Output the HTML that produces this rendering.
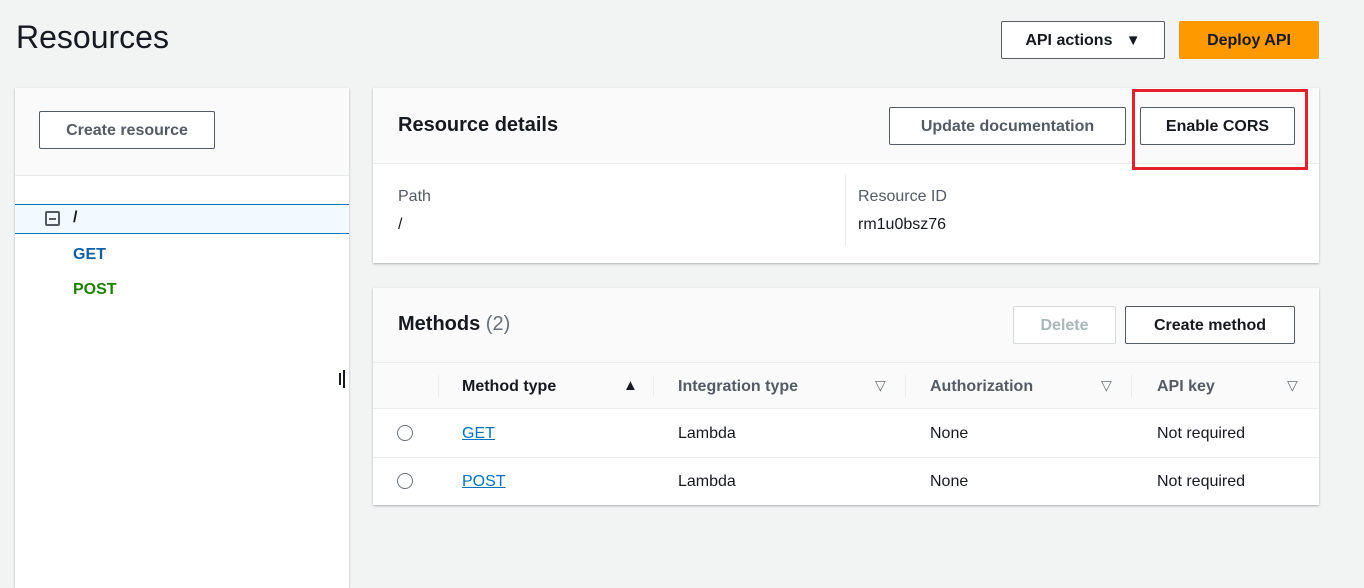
<!DOCTYPE html>
<html><head><style>
*{box-sizing:border-box;margin:0;padding:0}
body{width:1364px;height:586px;background:#f2f3f3;font-family:"Liberation Sans",sans-serif;position:relative;overflow:hidden;color:#16191f}
.a{position:absolute}
.btn{position:absolute;border:1px solid #545b64;border-radius:2px;background:#fff;font-weight:bold;font-size:16px;color:#545b64;display:flex;align-items:center;justify-content:center;padding-top:1px}
.card{position:absolute;background:#fff;box-shadow:0 1px 2px rgba(0,28,36,.3)}
.hdr{position:absolute;left:0;right:0;top:0;background:#fafafa;border-bottom:1px solid #eaeded}
.t{position:absolute;font-size:16px;white-space:nowrap}
.lnk{color:#0073bb;text-decoration:underline}
.radio{position:absolute;width:16px;height:16px;border:1.5px solid #687078;border-radius:50%}
.sep{position:absolute;width:1px;height:22px;background:#eaeded;top:12px}
.tri{position:absolute;font-size:14px;color:#687078}
</style></head><body>
<div class="t" style="left:16px;top:19px;font-size:32px;color:#16191f">Resources</div>
<div class="btn" style="left:1001px;top:21px;width:164px;height:38px;color:#16191f">API actions&nbsp;&nbsp;&nbsp;<span style="font-size:15px">▼</span></div>
<div class="btn" style="left:1179px;top:21px;width:140px;height:38px;background:#ff9900;border-color:#ff9900;color:#16191f">Deploy API</div>

<div class="card" style="left:15px;top:88px;width:334px;height:500px">
  <div class="hdr" style="height:88px"></div>
  <div class="btn" style="left:24px;top:23px;width:176px;height:38px">Create resource</div>
  <div class="a" style="left:0;top:116px;width:334px;height:30px;background:#f1faff;border-top:1px solid #0073bb;border-bottom:1px solid #0073bb"></div>
  <div class="a" style="left:30px;top:123px;width:15px;height:15px;border:2px solid #545b64;border-radius:2px"><div class="a" style="left:2px;top:4.5px;width:7px;height:2px;background:#545b64"></div></div>
  <div class="t" style="left:58px;top:121px;font-weight:bold">/</div>
  <div class="t" style="left:58px;top:158px;font-weight:bold;color:#0f5fa5">GET</div>
  <div class="t" style="left:58px;top:193px;font-weight:bold;color:#1d8102">POST</div>
</div>
<div class="a" style="left:339px;top:373px;width:2px;height:12px;background:#16191f"></div>
<div class="a" style="left:343px;top:370px;width:2px;height:18px;background:#16191f"></div>

<div class="card" style="left:373px;top:88px;width:946px;height:175px">
  <div class="hdr" style="height:76px"></div>
  <div class="t" style="left:25px;top:26px;font-size:20px;font-weight:bold">Resource details</div>
  <div class="btn" style="left:516px;top:19px;width:237px;height:38px">Update documentation</div>
  <div class="btn" style="left:767px;top:19px;width:155px;height:38px;color:#16191f">Enable CORS</div>
  <div class="a" style="left:472px;top:86px;width:1px;height:72px;background:#eaeded"></div>
  <div class="t" style="left:25px;top:100px;color:#545b64">Path</div>
  <div class="t" style="left:25px;top:128px">/</div>
  <div class="t" style="left:485px;top:100px;color:#545b64">Resource ID</div>
  <div class="t" style="left:485px;top:128px">rm1u0bsz76</div>
</div>
<div class="a" style="left:1132px;top:89px;width:176px;height:81px;border:3px solid #e3202c"></div>

<div class="card" style="left:373px;top:288px;width:946px;height:217px">
  <div class="hdr" style="height:75px"></div>
  <div class="t" style="left:25px;top:25px;font-size:20px;font-weight:bold">Methods <span style="font-weight:normal;color:#687078">(2)</span></div>
  <div class="btn" style="left:640px;top:18px;width:103px;height:38px;border-color:#d5dbdb;color:#aab7b8">Delete</div>
  <div class="btn" style="left:752px;top:18px;width:170px;height:38px;color:#16191f">Create method</div>
  <div class="a" style="left:0;top:75px;width:946px;height:46px;background:#fafafa;border-bottom:1px solid #eaeded"></div>
  <div class="a" style="left:0;top:75px;width:946px;height:46px">
    <div class="sep" style="left:65px"></div><div class="sep" style="left:280px"></div><div class="sep" style="left:532px"></div><div class="sep" style="left:758px"></div>
    <div class="t" style="left:89px;top:15px;font-weight:bold">Method type</div><div class="tri" style="left:250px;top:14px;color:#16191f;font-size:15px">▲</div>
    <div class="t" style="left:305px;top:15px;font-weight:bold;color:#545b64">Integration type</div><div class="tri" style="left:502px;top:14px">▽</div>
    <div class="t" style="left:557px;top:15px;font-weight:bold;color:#545b64">Authorization</div><div class="tri" style="left:728px;top:14px">▽</div>
    <div class="t" style="left:784px;top:15px;font-weight:bold;color:#545b64">API key</div><div class="tri" style="left:914px;top:14px">▽</div>
  </div>
  <div class="a" style="left:0;top:169px;width:946px;height:1px;background:#eaeded"></div>
  <div class="radio" style="left:24px;top:137px"></div>
  <div class="t lnk" style="left:89px;top:137px">GET</div>
  <div class="t" style="left:305px;top:137px">Lambda</div>
  <div class="t" style="left:557px;top:137px">None</div>
  <div class="t" style="left:784px;top:137px">Not required</div>
  <div class="radio" style="left:24px;top:185px"></div>
  <div class="t lnk" style="left:89px;top:185px">POST</div>
  <div class="t" style="left:305px;top:185px">Lambda</div>
  <div class="t" style="left:557px;top:185px">None</div>
  <div class="t" style="left:784px;top:185px">Not required</div>
</div>
</body></html>
